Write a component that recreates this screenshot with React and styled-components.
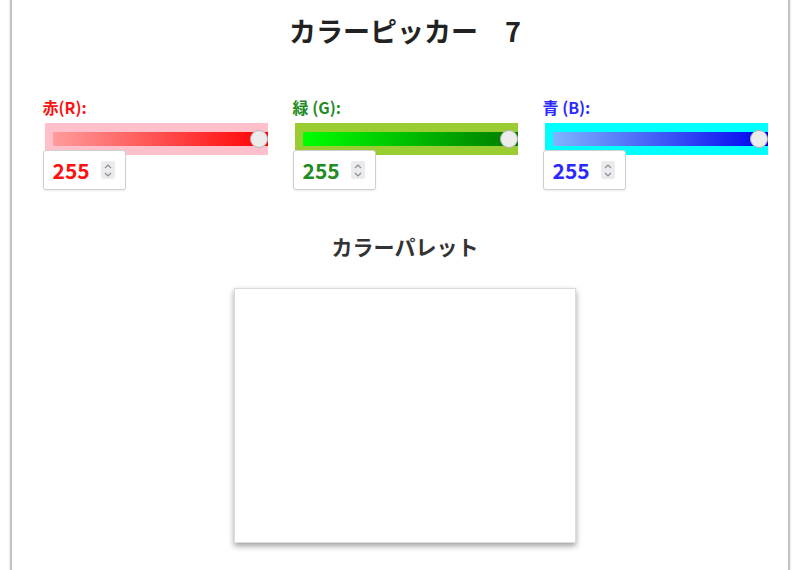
import React, { useState } from "react";
import styled, { createGlobalStyle } from "styled-components";

const GlobalStyle = createGlobalStyle`
  html, body {
    margin: 0;
    padding: 0;
    background: #ffffff;
    overflow: hidden;
  }
  body {
    font-family: "Noto Sans CJK JP", "Noto Sans", sans-serif;
    color: #222;
  }
`;

const Card = styled.div`
  margin: -4px 10px 0;
  min-height: 600px;
  border: 2px solid #c4c4c4;
  box-shadow: 0 0 2px rgba(0, 0, 0, 0.18);
  padding: 17px 0 0 10px;
  box-sizing: border-box;
`;

const Title = styled.h1`
  margin: 0;
  font-size: 27px;
  line-height: 32px;
  font-weight: 700;
  text-align: center;
  color: #222;
`;

const Controls = styled.div`
  display: grid;
  grid-template-columns: repeat(3, 227px);
  column-gap: 23px;
  justify-content: center;
  margin-top: 50px;
  padding-left: 2px;
`;

const Channel = styled.div`
  display: flex;
  flex-direction: column;
  align-items: flex-start;
`;

const Label = styled.label`
  font-size: 16px;
  line-height: 20px;
  font-weight: 700;
  color: ${(p) => p.$color};
  margin-bottom: 6px;
`;

const SliderFrame = styled.div`
  width: 223px;
  height: 32px;
  margin-left: 2px;
  padding-left: 8px;
  box-sizing: border-box;
  background: ${(p) => p.$frame};
  display: flex;
  align-items: center;
`;

const Range = styled.input.attrs({ type: "range", min: 0, max: 255 })`
  -webkit-appearance: none;
  appearance: none;
  width: 100%;
  height: 18px;
  margin: 0;
  background: transparent;
  outline: none;

  &::-webkit-slider-runnable-track {
    height: 14px;
    background: ${(p) => p.$track};
  }

  &::-webkit-slider-thumb {
    -webkit-appearance: none;
    appearance: none;
    width: 18px;
    height: 18px;
    margin-top: -2px;
    border-radius: 50%;
    background: #ececec;
    border: 1px solid #b5b5b5;
    box-sizing: border-box;
  }
`;

const NumberBox = styled.div`
  margin-top: -5px;
  width: 83px;
  height: 40px;
  box-sizing: border-box;
  border: 1px solid #cfcfcf;
  border-radius: 3px;
  background: #fff;
  box-shadow: 0 1px 2px rgba(0, 0, 0, 0.08);
  display: flex;
  align-items: center;
  padding-left: 9px;
  gap: 8px;
`;

const NumberInput = styled.input.attrs({ type: "number", min: 0, max: 255 })`
  width: 40px;
  border: none;
  outline: none;
  padding: 0;
  font-family: "Noto Sans CJK JP", "Noto Sans", sans-serif;
  font-size: 21px;
  font-weight: 700;
  color: ${(p) => p.$color};
  background: transparent;
  appearance: textfield;
  -moz-appearance: textfield;

  &::-webkit-inner-spin-button,
  &::-webkit-outer-spin-button {
    -webkit-appearance: none;
    margin: 0;
  }
`;

const Spinner = styled.div`
  width: 14px;
  height: 18px;
  background: #ebebef;
  border-radius: 2px;
  display: flex;
  flex-direction: column;
  align-items: center;
  justify-content: center;
  gap: 1px;
`;

const SpinButton = styled.button`
  border: none;
  padding: 0;
  margin: 0;
  background: none;
  width: 10px;
  height: 7px;
  display: flex;
  align-items: center;
  justify-content: center;
  cursor: pointer;
`;

const SectionTitle = styled.h2`
  margin: 42px 0 0;
  font-size: 21px;
  line-height: 28px;
  font-weight: 700;
  text-align: center;
  color: #333;
`;

const Palette = styled.div`
  margin: 28px auto 0;
  width: 342px;
  height: 255px;
  border: 1px solid #dadada;
  box-shadow: 0 3px 6px rgba(0, 0, 0, 0.38);
  box-sizing: border-box;
`;

const Chevron = ({ up }) => (
  <svg width="8" height="5" viewBox="0 0 8 5">
    <path
      d={up ? "M1 4 L4 1 L7 4" : "M1 1 L4 4 L7 1"}
      fill="none"
      stroke="#8a8a8a"
      strokeWidth="1.1"
    />
  </svg>
);

const channels = [
  {
    key: "r",
    label: "赤(R):",
    color: "#ff1010",
    frame: "#ffc0cb",
    track: "linear-gradient(to right, #ff9c9c, #ff0000)",
  },
  {
    key: "g",
    label: "緑 (G):",
    color: "#228b22",
    frame: "#9acd32",
    track: "linear-gradient(to right, #00ff00, #007a00)",
  },
  {
    key: "b",
    label: "青 (B):",
    color: "#2a2aff",
    frame: "#00ffff",
    track: "linear-gradient(to right, #80b4ff, #0000f0)",
  },
];

export default function App() {
  const [rgb, setRgb] = useState({ r: 255, g: 255, b: 255 });

  const update = (key, v) => {
    const n = Math.max(0, Math.min(255, Number(v) || 0));
    setRgb((prev) => ({ ...prev, [key]: n }));
  };

  return (
    <>
      <GlobalStyle />
      <Card>
        <Title>カラーピッカー　7</Title>
        <Controls>
          {channels.map((c) => (
            <Channel key={c.key}>
              <Label $color={c.color}>{c.label}</Label>
              <SliderFrame $frame={c.frame}>
                <Range
                  $track={c.track}
                  value={rgb[c.key]}
                  onChange={(e) => update(c.key, e.target.value)}
                />
              </SliderFrame>
              <NumberBox>
                <NumberInput
                  $color={c.color}
                  value={rgb[c.key]}
                  onChange={(e) => update(c.key, e.target.value)}
                />
                <Spinner>
                  <SpinButton onClick={() => update(c.key, rgb[c.key] + 1)}>
                    <Chevron up />
                  </SpinButton>
                  <SpinButton onClick={() => update(c.key, rgb[c.key] - 1)}>
                    <Chevron />
                  </SpinButton>
                </Spinner>
              </NumberBox>
            </Channel>
          ))}
        </Controls>
        <SectionTitle>カラーパレット</SectionTitle>
        <Palette style={{ background: `rgb(${rgb.r}, ${rgb.g}, ${rgb.b})` }} />
      </Card>
    </>
  );
}
